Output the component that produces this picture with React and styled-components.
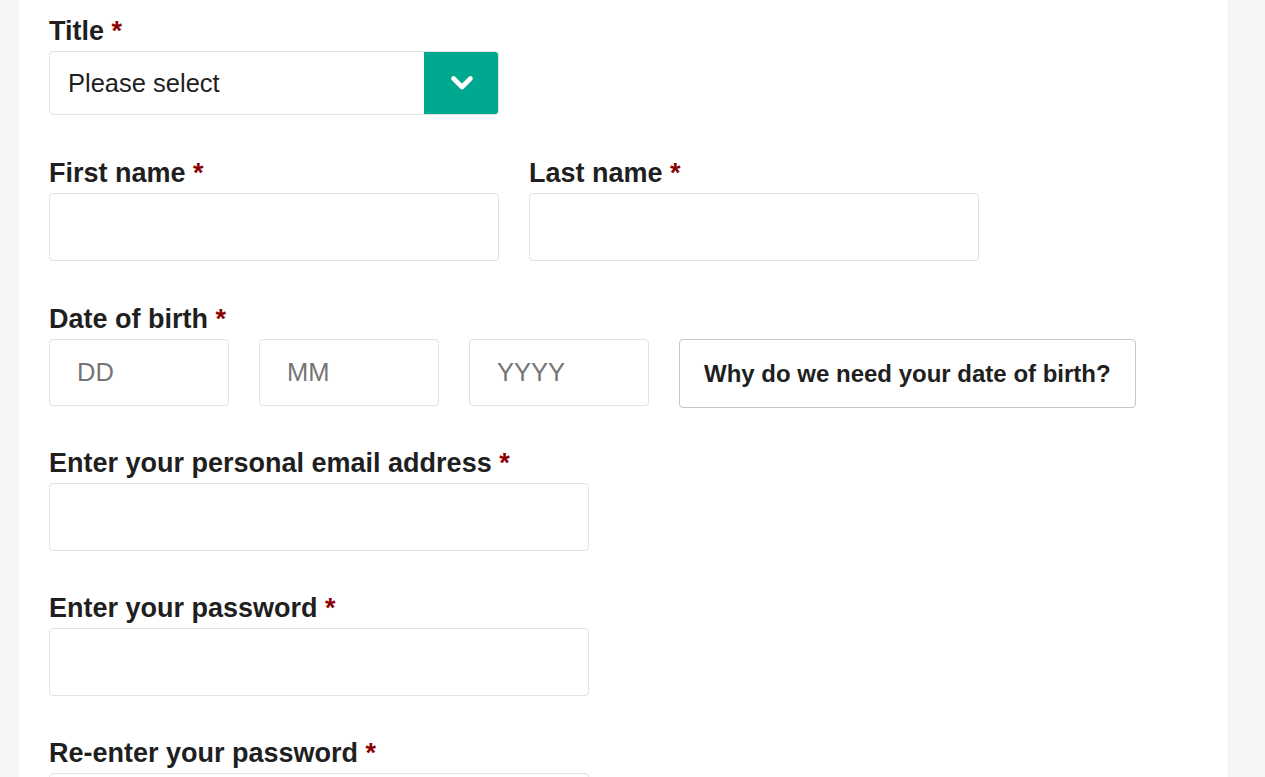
import styled, { createGlobalStyle } from "styled-components";

const GlobalStyle = createGlobalStyle`
  html, body {
    margin: 0;
    padding: 0;
    background: #f6f6f6;
    font-family: "Liberation Sans", Arial, sans-serif;
    color: #1f1f1f;
  }
  * {
    box-sizing: border-box;
  }
`;

export default function App() {
    return (
        <>
            <GlobalStyle />
            <Page>
                <Panel>
                    <Group $gap={42}>
                        <Label>Title <Req>*</Req></Label>
                        <Select>
                            <SelectText>Please select</SelectText>
                            <SelectButton>
                                <svg width="24" height="16" viewBox="0 0 24 16">
                                    <path d="M3.5 3.5 L12 12 L20.5 3.5" fill="none" stroke="#fff" strokeWidth="4.6" strokeLinecap="round" strokeLinejoin="round" />
                                </svg>
                            </SelectButton>
                        </Select>
                    </Group>

                    <Row>
                        <Group $gap={42}>
                            <Label>First name <Req>*</Req></Label>
                            <Input $width={450} />
                        </Group>
                        <Group $gap={42}>
                            <Label>Last name <Req>*</Req></Label>
                            <Input $width={450} />
                        </Group>
                    </Row>

                    <Group>
                        <Label>Date of birth <Req>*</Req></Label>
                        <DateRow>
                            <Input $width={180} placeholder="DD" />
                            <Input $width={180} placeholder="MM" />
                            <Input $width={180} placeholder="YYYY" />
                            <WhyButton>Why do we need your date of birth?</WhyButton>
                        </DateRow>
                    </Group>

                    <Group>
                        <Label>Enter your personal email address <Req>*</Req></Label>
                        <Input $width={540} />
                    </Group>

                    <Group>
                        <Label>Enter your password <Req>*</Req></Label>
                        <Input $width={540} type="password" />
                    </Group>

                    <Group>
                        <Label>Re-enter your password <Req>*</Req></Label>
                        <Input $width={540} type="password" />
                    </Group>
                </Panel>
            </Page>
        </>
    );
};

const Page = styled.div`
    min-height: 777px;
    padding-left: 19px;
    padding-right: 37px;
    overflow: hidden;
`;

const Panel = styled.div`
    background: #ffffff;
    min-height: 900px;
    padding: 15px 30px 0 30px;
    box-shadow: 1px 0 3px rgba(0, 0, 0, 0.04);
`;

const Group = styled.div`
    display: flex;
    flex-direction: column;
    margin-bottom: ${props => props.$gap ?? 41}px;
`;

const Row = styled.div`
    display: flex;
    gap: 30px;
`;

const DateRow = styled.div`
    display: flex;
    align-items: flex-start;
    gap: 30px;
    height: 67px;
`;

const Label = styled.label`
    font-size: 27px;
    font-weight: 700;
    line-height: 32px;
    margin-bottom: 4px;
    color: #1f1f1f;
`;

const Req = styled.span`
    color: #8b0000;
`;

const Select = styled.div`
    display: flex;
    width: 450px;
    height: 64px;
    border: 1px solid #e2e2e2;
    border-radius: 4px;
    overflow: hidden;
`;

const SelectText = styled.div`
    flex: 1;
    display: flex;
    align-items: center;
    padding-left: 18px;
    font-size: 25.5px;
    color: #1f1f1f;
`;

const SelectButton = styled.div`
    width: 75px;
    margin: -1px -1px -1px 0;
    background: #00a88f;
    display: flex;
    align-items: center;
    justify-content: center;
`;

const Input = styled.input`
    width: ${props => props.$width}px;
    height: 68px;
    border: 1px solid #e2e2e2;
    border-radius: 4px;
    padding: 0 27px;
    font-family: "Liberation Sans", Arial, sans-serif;
    font-size: 25.5px;
    color: #1f1f1f;
    background: #fff;
    outline: none;

    ${DateRow} & {
        height: 67px;
    }

    ::placeholder {
        color: #757575;
    }
`;

const WhyButton = styled.button`
    height: 69px;
    padding: 0 24px;
    border: 1px solid #c5c5c5;
    border-radius: 4px;
    background: #fff;
    font-family: "Liberation Sans", Arial, sans-serif;
    font-size: 24px;
    font-weight: 700;
    color: #1f1f1f;
    white-space: nowrap;
`;
